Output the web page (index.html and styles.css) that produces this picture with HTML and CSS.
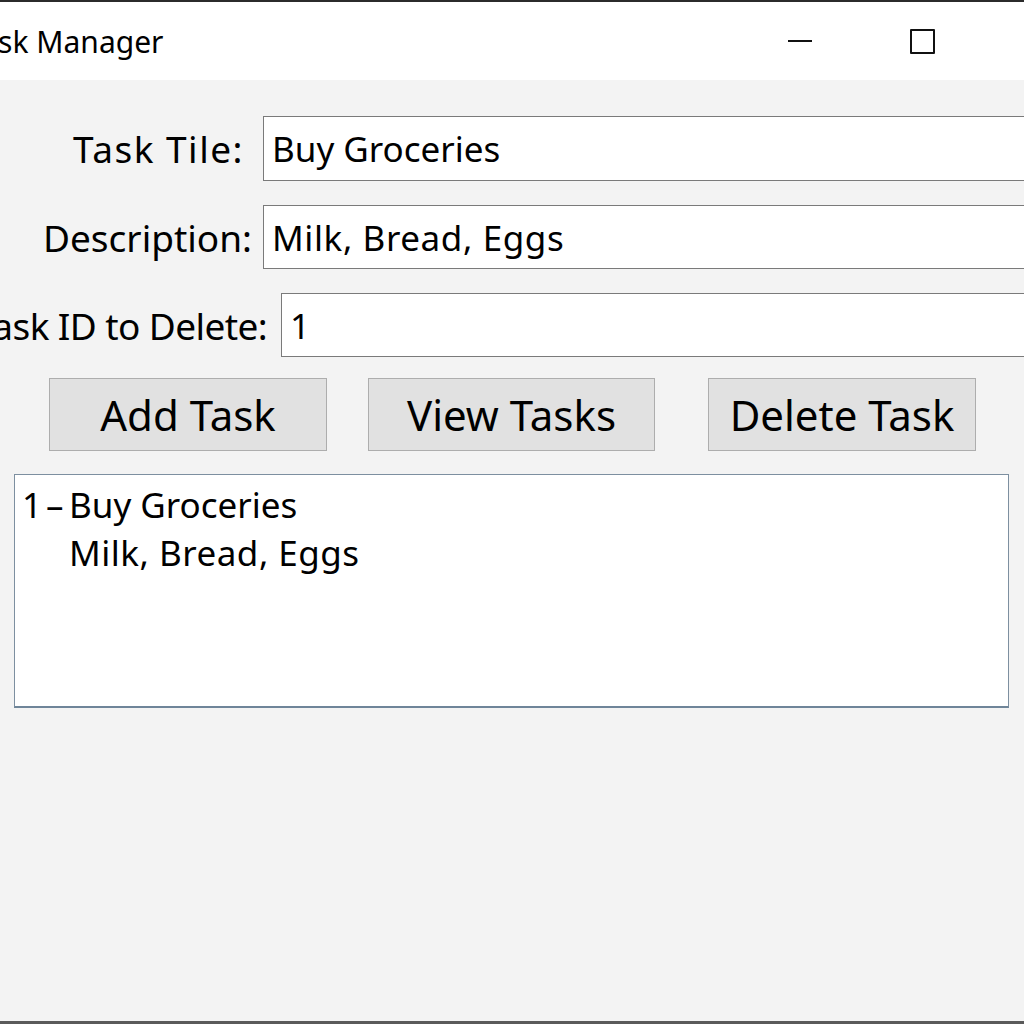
FILE: index.html
```html
<!DOCTYPE html>
<html lang="en">
<head>
<meta charset="utf-8">
<title>Task Manager</title>
<link rel="stylesheet" href="styles.css">
</head>
<body>
<div class="window">
  <div class="titlebar">
    <span class="title">Task Manager</span>
    <div class="controls">
      <span class="ctrl-min"></span>
      <span class="ctrl-max"></span>
    </div>
  </div>
  <div class="content">
    <div class="form">
      <div class="row row-title">
        <label class="label">Task Tile:</label>
        <input class="field" type="text" value="Buy Groceries">
      </div>
      <div class="row row-desc">
        <label class="label">Description:</label>
        <input class="field" type="text" value="Milk, Bread, Eggs">
      </div>
      <div class="row row-id">
        <label class="label">Task ID to Delete:</label>
        <input class="field" type="text" value="1">
      </div>
    </div>
    <div class="buttons">
      <button class="btn btn-add">Add Task</button>
      <button class="btn btn-view">View Tasks</button>
      <button class="btn btn-delete">Delete Task</button>
    </div>
    <div class="listbox">
      <div class="task">
        <span class="task-id">1–</span>
        <span class="task-title">Buy Groceries</span>
        <span class="task-desc">Milk, Bread, Eggs</span>
      </div>
    </div>
  </div>
</div>
</body>
</html>
```
FILE: styles.css
```css
html, body {
  margin: 0;
  padding: 0;
}
body {
  overflow: hidden;
  background: #f3f3f3;
  font-family: "Noto Sans", "Open Sans", sans-serif;
  color: #000;
}
.window {
  width: 1024px;
  height: 1024px;
  box-sizing: border-box;
  border-top: 2px solid #2b2b2b;
  border-bottom: 3px solid #5a5a5a;
  display: flex;
  flex-direction: column;
  overflow: hidden;
  background: #f3f3f3;
}
.titlebar {
  height: 78px;
  flex: none;
  background: #fff;
  display: flex;
  align-items: center;
}
.title {
  font-size: 30px;
  margin-left: -33px;
  white-space: nowrap;
}
.controls {
  margin-left: auto;
  padding-right: 89px;
  display: flex;
  align-items: center;
  gap: 98px;
}
.ctrl-min {
  width: 24px;
  height: 2px;
  background: #111;
}
.ctrl-max {
  width: 21px;
  height: 21px;
  border: 2px solid #111;
  border-radius: 1px;
}
.content {
  padding-top: 36px;
  display: flex;
  flex-direction: column;
}
.form {
  display: flex;
  flex-direction: column;
  gap: 24px;
}
.row {
  display: flex;
  align-items: center;
  height: 65px;
}
.label {
  flex: none;
  text-align: right;
  font-size: 37px;
  white-space: nowrap;
  display: flex;
  justify-content: flex-end;
}
.row-title .label { width: 244px; margin-right: 19px; letter-spacing: 1.5px; }
.row-desc .label { width: 252px; margin-right: 11px; }
.row-id .label { width: 267px; margin-right: 14px; letter-spacing: -0.6px; }
.row-desc, .row-id { height: 64px; }
.field {
  flex: none;
  width: 900px;
  height: 100%;
  box-sizing: border-box;
  border: 1px solid #7a7a7a;
  background: #fff;
  font-family: inherit;
  font-size: 35px;
  color: #000;
  padding: 0 0 0 8px;
  margin: 0;
  outline: none;
}
.row-desc .field { letter-spacing: 0.6px; }
.buttons {
  margin-top: 21px;
  padding-left: 49px;
  display: flex;
}
.btn {
  height: 73px;
  box-sizing: border-box;
  border: 1px solid #adadad;
  background: #e1e1e1;
  font-family: inherit;
  font-size: 42px;
  color: #000;
  padding: 0;
  margin: 0;
}
.btn-add { width: 278px; }
.btn-view { width: 287px; margin-left: 41px; }
.btn-delete { width: 268px; margin-left: 53px; }
.listbox {
  margin: 23px 0 0 14px;
  width: 995px;
  height: 234px;
  box-sizing: border-box;
  border: 1px solid #7d8fa0;
  border-bottom: 2px solid #6f8599;
  background: #fff;
  padding: 6px 0 0 7px;
  font-size: 35px;
  line-height: 48px;
}
.task {
  display: grid;
  grid-template-columns: 47px auto;
  justify-content: start;
}
.task-id { grid-row: 1; grid-column: 1; letter-spacing: 4px; }
.task-title { grid-row: 1; grid-column: 2; }
.task-desc { grid-row: 2; grid-column: 2; letter-spacing: 0.5px; }
```
